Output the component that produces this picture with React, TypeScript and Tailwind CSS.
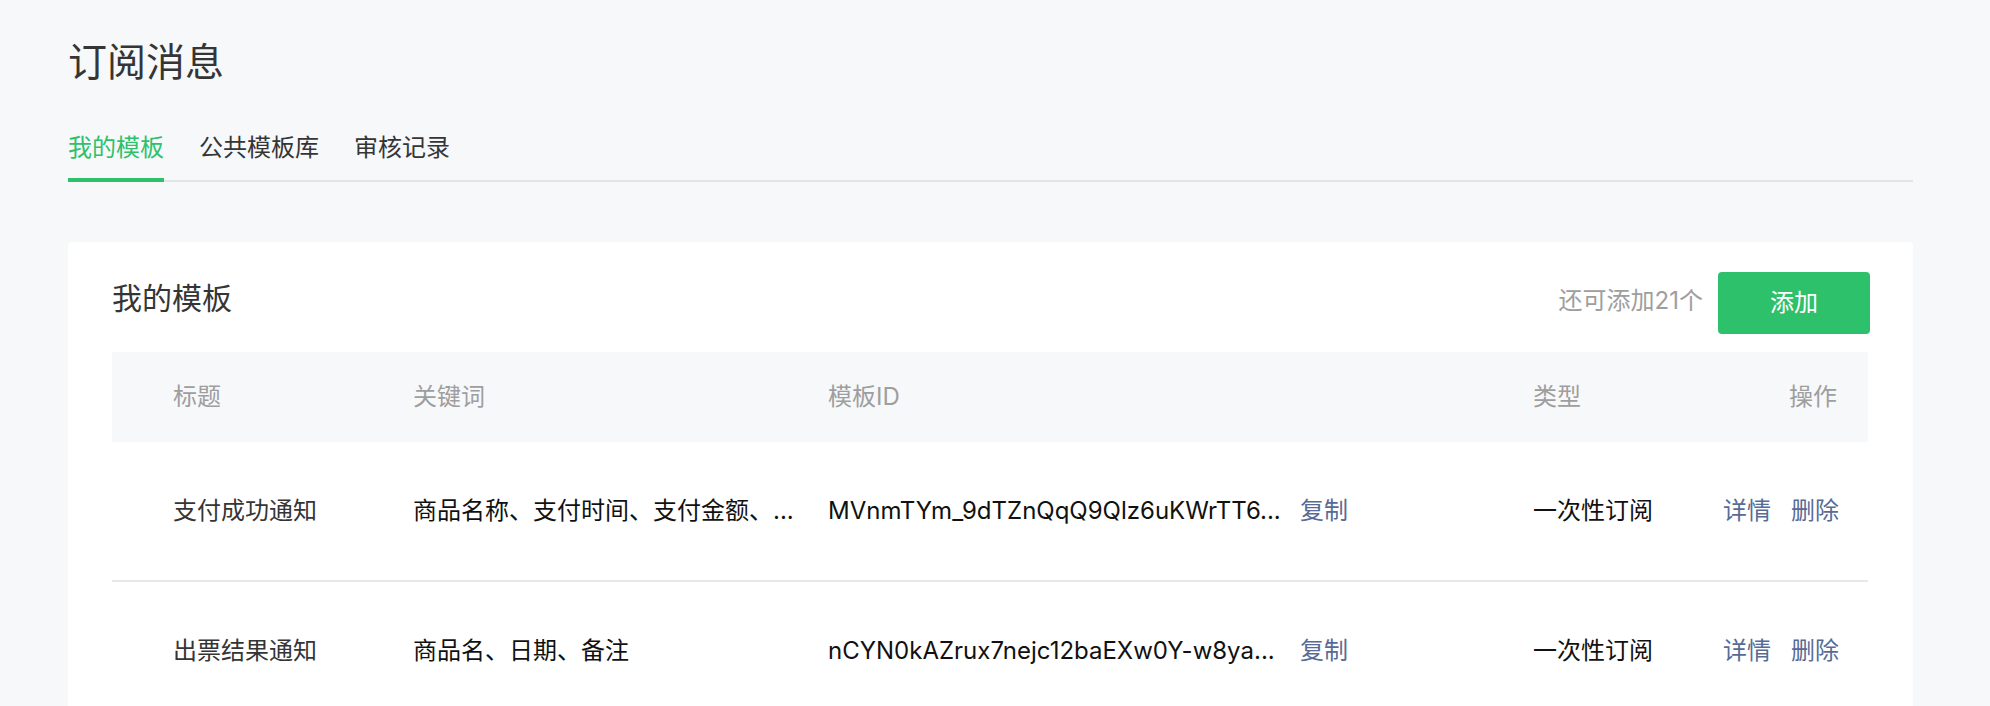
const font = "font-['Inter','Noto_Sans_CJK_SC',sans-serif]";

const rows = [
  {
    title: "支付成功通知",
    keywords: "商品名称、支付时间、支付金额、...",
    id: "MVnmTYm_9dTZnQqQ9Qlz6uKWrTT6...",
    type: "一次性订阅",
  },
  {
    title: "出票结果通知",
    keywords: "商品名、日期、备注",
    id: "nCYN0kAZrux7nejc12baEXw0Y-w8ya...",
    type: "一次性订阅",
  },
];

const tabs = ["我的模板", "公共模板库", "审核记录"];

export default function App() {
  return (
    <div className={`${font} min-h-screen bg-[#f7f8fa] pt-[42px]`}>
      <div className="ml-[68px] w-[1845px]">
        <h1 className="text-[39px] leading-[40px] text-[#353535]">订阅消息</h1>

        <div className="mt-[54px] flex gap-[35px] border-b-2 border-[#e4e4e7]">
          {tabs.map((t, i) => (
            <div
              key={t}
              className={
                i === 0
                  ? "-mb-[2px] border-b-4 border-[#2ec16b] pb-[18px] text-[24px] leading-[24px] text-[#2ec16b]"
                  : "-mb-[2px] border-b-4 border-transparent pb-[18px] text-[24px] leading-[24px] text-[#353535]"
              }
            >
              {t}
            </div>
          ))}
        </div>

        <div className="mt-[60px] rounded-[4px] bg-white pb-[40px] pl-[44px] pr-[45px] pt-[30px]">
          <div className="flex items-start justify-between">
            <h2 className="mt-[11px] text-[30px] leading-[30px] text-[#353535]">我的模板</h2>
            <div className="-mr-[2px] flex items-start gap-[15px]">
              <span className="mt-[17px] text-[24px] leading-[24px] text-[#9e9e9e]">还可添加21个</span>
              <button className="flex h-[62px] w-[152px] items-center justify-center rounded-[4px] bg-[#2ec16b] text-[24px] text-white">
                添加
              </button>
            </div>
          </div>

          <div className="mt-[18px]">
            <div className="flex h-[90px] items-center bg-[#f7f8fa] pl-[61px] text-[24px] leading-[24px] text-[#9e9e9e]">
              <div className="w-[240px]">标题</div>
              <div className="w-[415px]">关键词</div>
              <div className="w-[705px]">模板ID</div>
              <div className="w-[190px]">类型</div>
              <div className="flex-1 pr-[31px] text-right">操作</div>
            </div>

            {rows.map((r) => (
              <div
                key={r.title}
                className="flex h-[140px] items-center border-b-2 border-[#e7e7ec] pl-[61px] text-[24px] leading-[24px]"
              >
                <div className="w-[240px] text-[#353535]">{r.title}</div>
                <div className="w-[415px] whitespace-nowrap text-[#111]">{r.keywords}</div>
                <div className="flex w-[705px] items-center">
                  <span className="w-[472px] whitespace-nowrap text-[#111]">{r.id}</span>
                  <span className="text-[#576b95]">复制</span>
                </div>
                <div className="w-[190px] text-[#111]">{r.type}</div>
                <div className="flex flex-1 justify-end gap-[20px] pr-[29px] text-[#576b95]">
                  <span>详情</span>
                  <span>删除</span>
                </div>
              </div>
            ))}
          </div>
        </div>
      </div>
    </div>
  );
}
